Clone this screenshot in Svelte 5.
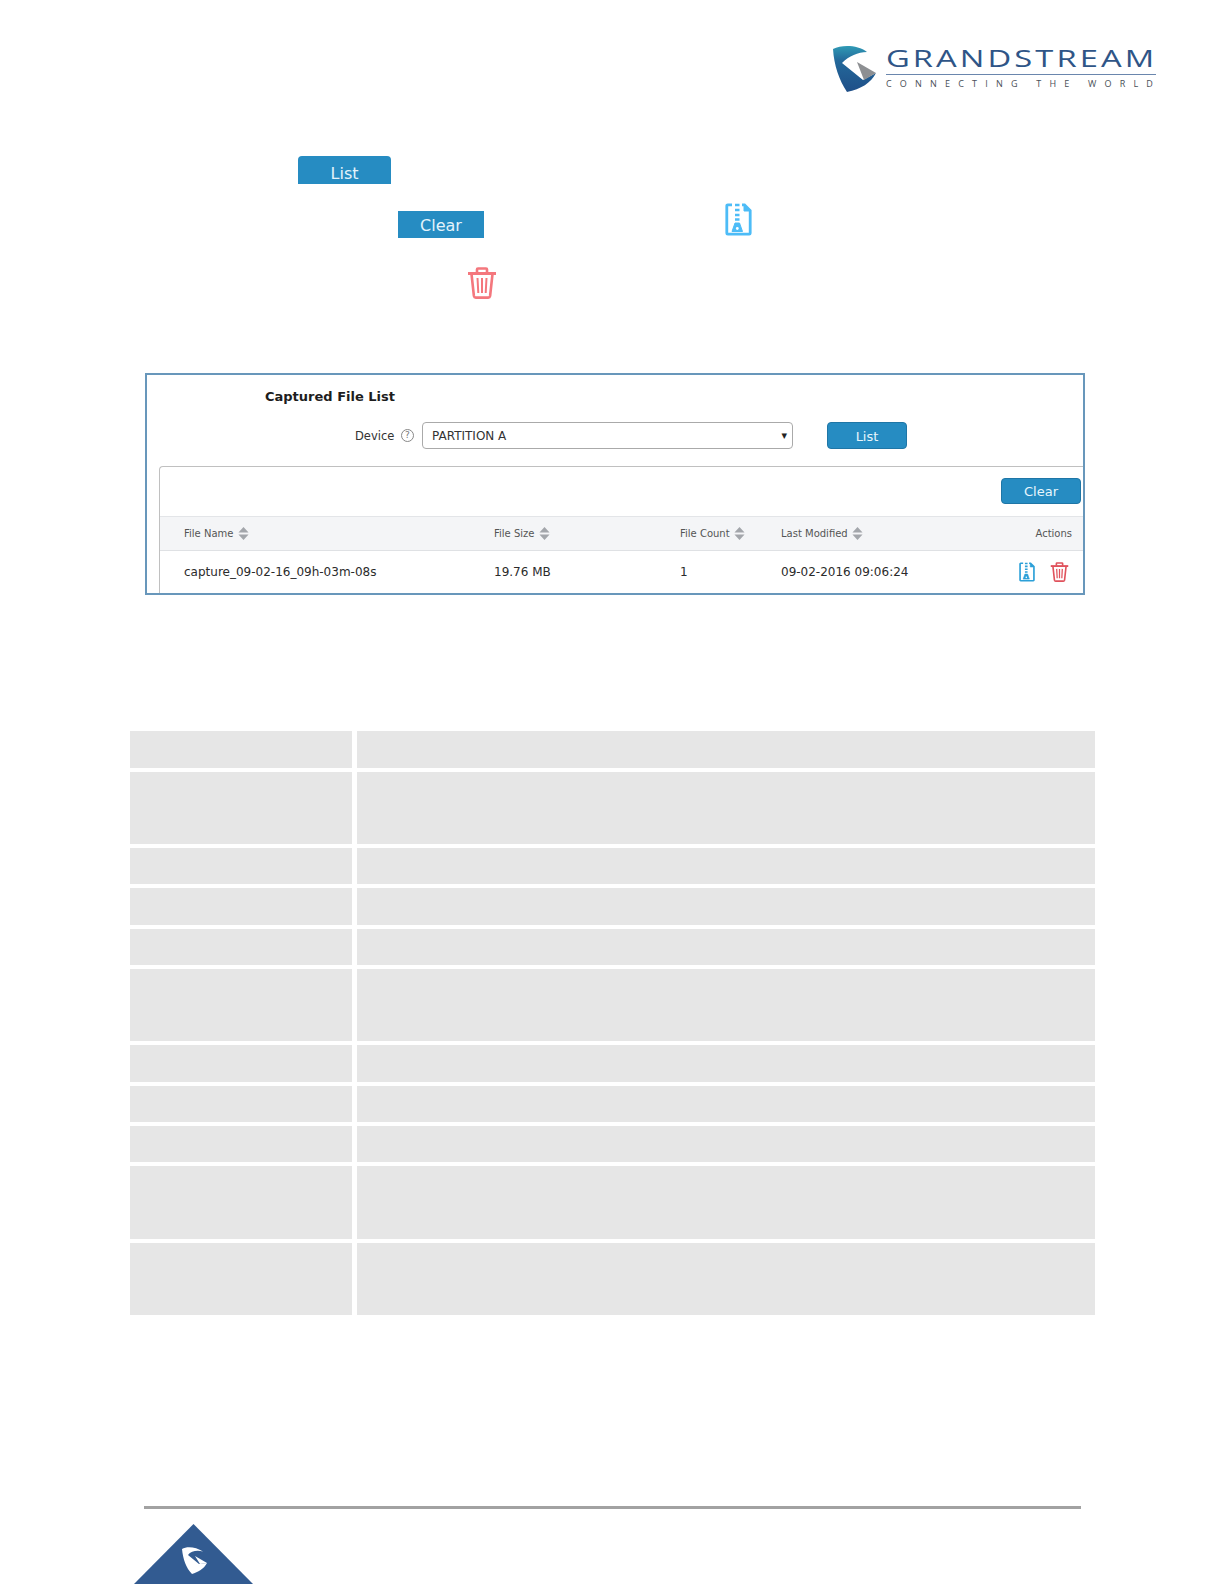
<script>
    const files = [
        { name: 'capture_09-02-16_09h-03m-08s', size: '19.76 MB', count: '1', modified: '09-02-2016 09:06:24' }
    ];
    const rows = [false, true, false, false, false, true, false, false, false, true, true];
</script>

{#snippet zip(cls)}
    <svg class={cls} viewBox="0 0 27 33" fill="none" stroke="currentColor" stroke-width="2.8">
        <path d="M7 1.800H2.800a1 1 0 0 0-1 1v27.400a1 1 0 0 0 1 1h21.400a1 1 0 0 0 1-1V7.500L19.500 1.800H17" />
        <path d="M19 2v6h6" fill="currentColor" stroke-width="1" />
        <path d="M10 2h4.500M10 7h4.500M10 12h4.500M10 16.500h4.500" stroke-width="2.600" />
        <path d="M10 20h4.500l3 8.500H7z" fill="currentColor" stroke-width="1" />
        <circle cx="12.300" cy="25.500" r="1.400" fill="#fff" stroke="none" />
    </svg>
{/snippet}

{#snippet trash(cls)}
    <svg class={cls} viewBox="0 0 30 32" fill="none" stroke="currentColor" stroke-width="2.600">
        <path d="M1 6.500h28" stroke-width="3" />
        <path d="M10 6V2.500a1 1 0 0 1 1-1h8a1 1 0 0 1 1 1V6" />
        <path d="M4.500 7l2.400 22a2 2 0 0 0 2 1.600h12.200a2 2 0 0 0 2-1.600L25.500 7" />
        <path d="M10.500 11l.8 15M15 11v15M19.500 11l-.8 15" stroke-width="2" />
    </svg>
{/snippet}

{#snippet sorter()}
    <svg class="sorter" viewBox="0 0 12 14"><path d="M6 0l5.500 6H.5z M6 14L.5 8h11z" fill="#a3a6ab" /></svg>
{/snippet}

<div class="page">
    <header class="brand">
        <svg class="mark" viewBox="0 0 46 48">
            <defs>
                <linearGradient id="shield" x1="0" y1="0" x2="0" y2="1">
                    <stop offset="0" stop-color="#2f9ab5" />
                    <stop offset="0.32" stop-color="#23689a" />
                    <stop offset="1" stop-color="#1f4f88" />
                </linearGradient>
            </defs>
            <path d="M2 4C11-.5 27 0 36 7C27 7 18 11 11 18L32 35L45 28C40 38 30 44 16 47C8 35 3 20 2 4z" fill="url(#shield)" />
            <path d="M26 17L45 28L33 35z" fill="#8d8f92" />
        </svg>
        <div class="wordmark">
            <div class="name">GRANDSTREAM</div>
            <div class="slogan-rule"></div>
            <div class="slogan">CONNECTING THE WORLD</div>
        </div>
    </header>

    <div class="doc-btn list-line"><span class="blue tab">List</span></div>

    <div class="clear-line">
        <span class="blue flat">Clear</span>
        {@render zip('zip-big')}
    </div>

    <div class="trash-line">{@render trash('trash-big')}</div>

    <section class="panel">
        <h3>Captured File List</h3>
        <div class="device-row">
            <span class="device-label">Device</span>
            <span class="help">?</span>
            <div class="select">PARTITION A<i>▾</i></div>
            <button class="btn list-btn">List</button>
        </div>
        <div class="files">
            <div class="toolbar"><button class="btn clear-btn">Clear</button></div>
            <div class="line head">
                <span>File Name {@render sorter()}</span>
                <span>File Size {@render sorter()}</span>
                <span>File Count {@render sorter()}</span>
                <span>Last Modified {@render sorter()}</span>
                <span class="right">Actions</span>
            </div>
            {#each files as f}
                <div class="line body">
                    <span>{f.name}</span>
                    <span>{f.size}</span>
                    <span>{f.count}</span>
                    <span>{f.modified}</span>
                    <span class="actions">{@render zip('zip-small')}{@render trash('trash-small')}</span>
                </div>
            {/each}
        </div>
    </section>

    <div class="grey-table">
        {#each rows as tall}
            <div class="grey-row" class:tall>
                <div></div>
                <div></div>
            </div>
        {/each}
    </div>

    <footer>
        <div class="rule"></div>
        <svg class="corner" viewBox="0 0 119 60">
            <path d="M59.500 0L119 60H0z" fill="#325b91" />
            <path d="M48 25C53 22 62 23 69 27.500C63 26 57 27 54 31L65 40L73 39C70 45 64 48 58 50C52 44 49 35 48 25z" fill="#fff" />
            <path d="M61 32L73 39L66 40z" fill="#fff" />
        </svg>
    </footer>
</div>

<style>
    :global(body) {
        background: #fff;
    }

    .page {
        width: 1224px;
        height: 1584px;
        overflow: hidden;
        display: flex;
        flex-direction: column;
        font-family: "DejaVu Sans", Verdana, sans-serif;
    }

    .brand {
        height: 156px;
        box-sizing: border-box;
        padding: 45px 68px 0 0;
        display: flex;
        justify-content: flex-end;
        align-items: flex-start;
        gap: 9px;
    }

    .mark {
        width: 46px;
        height: 48px;
    }

    .wordmark {
        width: 270px;
        font-family: "Open Sans", sans-serif;
    }

    .name {
        font-size: 24.500px;
        line-height: 24px;
        letter-spacing: 2.300px;
        margin-top: 1px;
        color: #2f5587;
        white-space: nowrap;
        transform: scaleX(1.335);
        transform-origin: left center;
    }

    .slogan-rule {
        height: 1px;
        margin-top: 4px;
        background: #6a86ad;
    }

    .slogan {
        font-size: 9px;
        line-height: 12px;
        letter-spacing: 8.200px;
        margin-top: 3px;
        color: #4a4f57;
        white-space: nowrap;
    }

    .blue {
        display: block;
        background: #268cc2;
        color: #e4f3fb;
        font-size: 16px;
        text-align: center;
        box-sizing: border-box;
    }

    .list-line {
        padding-left: 298px;
        height: 47px;
    }

    .tab {
        width: 93px;
        height: 28px;
        line-height: 35px;
        border-radius: 4px 4px 0 0;
        overflow: hidden;
    }

    .clear-line {
        height: 64px;
        padding-left: 398px;
        display: flex;
        align-items: flex-start;
    }

    .flat {
        width: 86px;
        height: 27px;
        line-height: 29px;
        margin-top: 8px;
    }

    .zip-big {
        width: 27px;
        height: 33px;
        margin-left: 241px;
        color: #4dbcf7;
    }

    .trash-line {
        height: 106px;
        padding-left: 467px;
    }

    .trash-big {
        display: block;
        width: 30px;
        height: 32px;
        color: #f4777d;
    }

    .panel {
        width: 940px;
        height: 222px;
        margin-left: 145px;
        box-sizing: border-box;
        border: 2px solid #6897bb;
        overflow: hidden;
        color: #333;
    }

    h3 {
        margin: 14px 0 0 118px;
        font-size: 13px;
        line-height: 16px;
        font-weight: bold;
        color: #1d1d1d;
    }

    .device-row {
        margin-top: 17px;
        height: 27px;
        display: flex;
        align-items: center;
        font-size: 11.500px;
    }

    .device-label {
        margin-left: 208px;
        width: 46px;
        padding-top: 1px;
    }

    .help {
        width: 11px;
        height: 11px;
        border: 1px solid #888;
        border-radius: 50%;
        font-size: 9px;
        line-height: 11px;
        text-align: center;
        color: #777;
    }

    .select {
        margin-left: 8px;
        width: 371px;
        height: 27px;
        box-sizing: border-box;
        border: 1px solid #aaa;
        border-radius: 4px;
        padding-left: 9px;
        font-size: 12px;
        line-height: 27px;
        display: flex;
        justify-content: space-between;
        color: #333;
    }

    .select i {
        font-style: normal;
        font-size: 11px;
        line-height: 25px;
        padding-right: 5px;
        color: #222;
    }

    .btn {
        background: #268cc2;
        border: 1px solid #1f76a6;
        border-radius: 4px;
        color: #e9f6fc;
        font-family: inherit;
        font-size: 13px;
        padding: 2px 0 0;
    }

    .list-btn {
        width: 80px;
        height: 27px;
        margin-left: 34px;
    }

    .files {
        margin: 17px 0 0 12px;
        border-top: 1px solid #c0c0c0;
        border-left: 1px solid #c0c0c0;
        border-top-left-radius: 4px;
        height: 140px;
    }

    .toolbar {
        height: 50px;
        box-sizing: border-box;
        padding: 11px 2px 0 0;
        display: flex;
        justify-content: flex-end;
        border-bottom: 1px solid #e3e5e8;
    }

    .clear-btn {
        width: 80px;
        height: 26px;
    }

    .line {
        display: grid;
        grid-template-columns: 310px 186px 101px 1fr 150px;
        padding-left: 24px;
        padding-right: 11px;
        align-items: center;
        white-space: nowrap;
    }

    .head {
        height: 34px;
        box-sizing: border-box;
        background: #f4f5f7;
        border-bottom: 1px solid #dfe1e4;
        font-size: 10px;
        color: #555;
    }

    .body {
        height: 43px;
        font-size: 12px;
        color: #2b2b2b;
    }

    .right {
        text-align: right;
    }

    .sorter {
        width: 11px;
        height: 13px;
        margin-left: 1px;
        vertical-align: -3px;
    }

    .actions {
        display: flex;
        justify-content: flex-end;
        align-items: center;
        gap: 15px;
        padding-right: 3px;
    }

    .zip-small {
        width: 16px;
        height: 20px;
        color: #2ca0d8;
    }

    .trash-small {
        width: 19px;
        height: 20px;
        color: #e0525c;
    }

    .grey-table {
        margin: 136.300px 0 0 130px;
        width: 965px;
        display: flex;
        flex-direction: column;
        gap: 4px;
    }

    .grey-row {
        display: grid;
        grid-template-columns: 222px 738px;
        column-gap: 5px;
        height: 36.350px;
    }

    .grey-row.tall {
        height: 72.350px;
    }

    .grey-row div {
        background: #e6e6e6;
    }

    footer {
        margin-top: 191px;
    }

    .rule {
        width: 937px;
        height: 3px;
        margin-left: 144px;
        background: #a2a2a2;
    }

    .corner {
        display: block;
        width: 119px;
        height: 60px;
        margin: 15px 0 0 134px;
    }
</style>
